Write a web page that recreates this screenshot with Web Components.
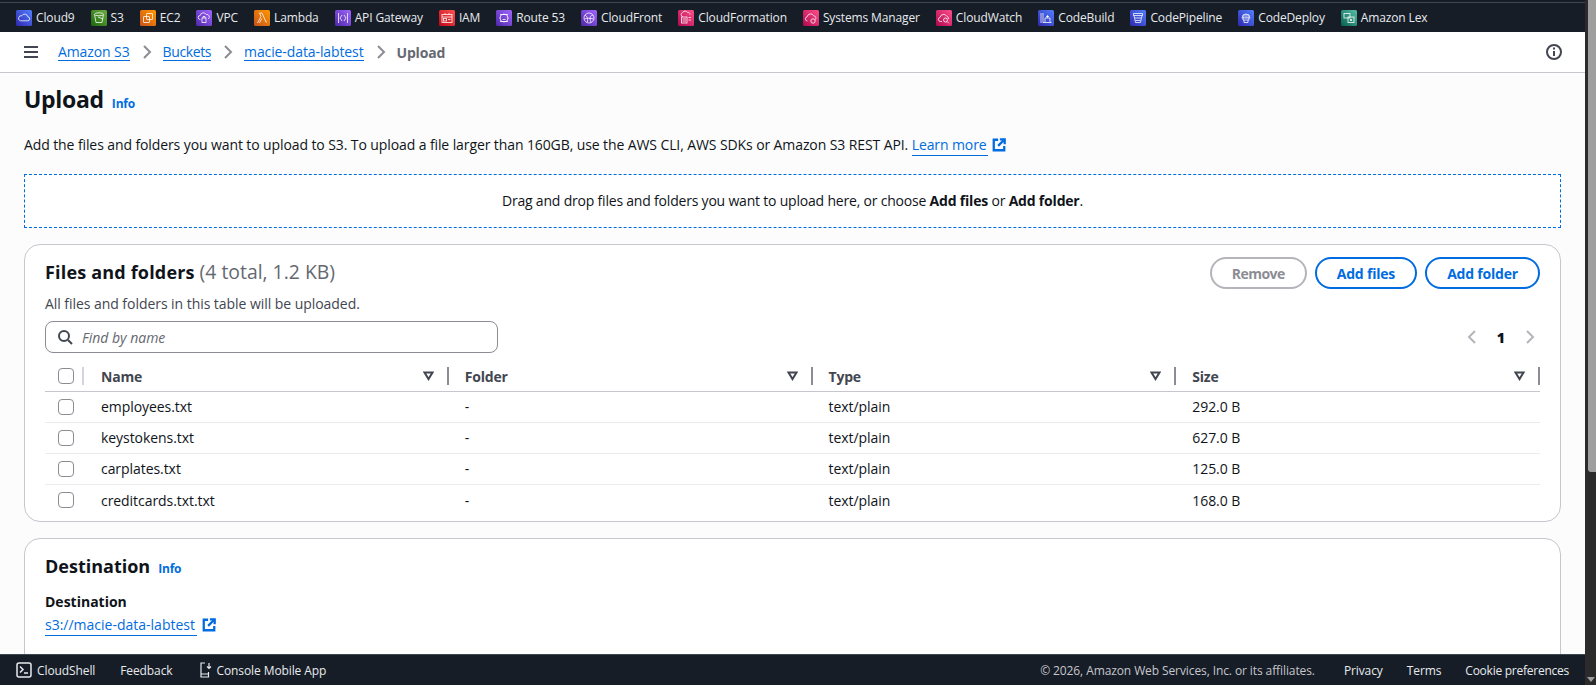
<!DOCTYPE html>
<html lang="en">
<head>
<meta charset="utf-8">
<title>Upload - Amazon S3</title>
<style>
  html, body { margin: 0; height: 100%; overflow: hidden; }
  body { font-family: "Open Sans", "Noto Sans", sans-serif; font-size: 14px; color: #0f141a; }
</style>
</head>
<body>
<console-shell>
  <service-bar slot="top"></service-bar>
  <crumb-bar slot="top"></crumb-bar>

  <info-heading size="23" tight>Upload</info-heading>
  <upload-intro>Add the files and folders you want to upload to S3. To upload a file larger than 160GB, use the AWS CLI, AWS SDKs or Amazon S3 REST API.</upload-intro>
  <drop-zone></drop-zone>
  <files-card></files-card>
  <destination-card></destination-card>

  <console-footer slot="bottom"></console-footer>
</console-shell>

<script>
"use strict";

const EXTERNAL_ICON = /*html*/ `<svg width="14" height="14" viewBox="0 0 16 16" fill="none" stroke="#006ce0" stroke-width="2.6" aria-hidden="true"><path d="M14 9v5H2V2h5"/><path d="M9 1.500h5.500V7"/><path d="M14.500 1.500 7 9"/></svg>`;

class ConsoleShell extends HTMLElement {
  constructor() {
    super();
    this.attachShadow({ mode: "open" }).innerHTML = /*html*/ `
      <style>
        :host { display: flex; height: 685px; background: #2b2b2b; }
        #page { flex: 0 0 1585px; display: flex; flex-direction: column; min-width: 0; }
        main { flex: 1 1 0; min-height: 0; overflow: hidden; background: #fcfcfc; padding: 11px 24px 0; }
        #bar { flex: 1 1 0; position: relative; }
        #thumb { margin-left: 3px; height: 472px; background: #9e9e9e; border-radius: 0 0 0 3px; }
        #arrow { position: absolute; right: 1px; bottom: 3px; width: 0; height: 0;
          border: 4px solid transparent; border-top: 5px solid #9e9e9e; border-bottom: 0; }
      </style>
      <div id="page">
        <slot name="top"></slot>
        <main><slot></slot></main>
        <slot name="bottom"></slot>
      </div>
      <div id="bar"><div id="thumb"></div><div id="arrow"></div></div>
    `;
  }
}

// glyphs for the service shortcuts, drawn on a 16x16 box
const GLYPHS = {
  cloud: `<path d="M4.500 10.800h7a2 2 0 0 0 .3-4 3.200 3.200 0 0 0-6-1 2.500 2.500 0 0 0-1.300 5Z"/>`,
  bucket: `<path d="M3.500 4.500 5 12.500h6l1.500-8"/><ellipse cx="8" cy="4.300" rx="4.500" ry="1.500"/><path d="m7 7 5 2"/>`,
  chip: `<rect x="6.500" y="3.500" width="6" height="6" rx=".5"/><rect x="3.500" y="6.500" width="6" height="6" rx=".5"/>`,
  vpc: `<path d="M4.500 9.500h-.3a2 2 0 0 1 0-4 3.200 3.200 0 0 1 6-1 2.500 2.500 0 0 1 2 4.500"/><rect x="6" y="8" width="4" height="4.500"/><path d="M7 8V6.500h2V8"/>`,
  lambda: `<path d="M3.500 13 7 6.500 5.500 3H8l4 9h1M7.800 8.500 5.500 13"/>`,
  gateway: `<path d="M3.500 3v10M12.500 3v10M7 5 5 8l2 3M9 5l2 3-2 3"/>`,
  iam: `<rect x="3" y="4.500" width="10" height="8"/><path d="M3 7h10"/><rect x="4.500" y="8.500" width="3" height="2.500"/><path d="M9 9.500h2.500M6 3v1.500M10 3v1.500"/>`,
  route: `<circle cx="8" cy="8" r="4"/><path d="M4 4.500h8M3.500 8h1M11.500 8h1M4 11.500h8M6.500 7h.1M9.500 7h.1M6.500 9.500h3"/>`,
  globe: `<circle cx="8" cy="8" r="5"/><path d="M4 5c2 1 3 3 2.500 7M12 5C9.500 5.500 8 7 10 12.500M3.500 9c2-1 6-1 9 0"/>`,
  stack: `<path d="M5 6.500h-.5a2 2 0 0 1 0-3.800 2.800 2.800 0 0 1 5-.2 2 2 0 0 1 2.500 2"/><rect x="3.500" y="7" width="5.500" height="6"/><path d="M4.500 9h3.500M4.500 11h3.500M10.500 7.500h2.500M10.500 10h2.500"/>`,
  gear: `<path d="M4.500 11h-.3a2.200 2.200 0 0 1 0-4.300 3.500 3.500 0 0 1 6.500-1 2.500 2.500 0 0 1 1.800 3.800"/><circle cx="10" cy="11" r="2.200"/>`,
  watch: `<path d="M6 11.500H4.200a2.200 2.200 0 0 1 0-4.300 3.500 3.500 0 0 1 6.500-1 2.500 2.500 0 0 1 1.800 2.800"/><circle cx="9.500" cy="10" r="2"/><path d="m11 11.500 1.800 1.800"/>`,
  build: `<path d="M3 3v10M5 3v10M5 12.500h8.500M7 12.500V8h5v4.500M9.500 8V5M8 6.500h3"/>`,
  pipeline: `<path d="M3.500 3.500h9v2h-9zM4 5.500l1.500 7h5l1.500-7M5 8h6M5.500 10.500h5"/>`,
  deploy: `<path d="M4 8a4 4 0 0 1 8 0ZM8 4v4M6 4.500 5.800 8M10 4.500l.2 3.500M5 8v2h6V8M6 10v2.500h4V10"/>`,
  lex: `<rect x="3" y="3.500" width="6" height="4.500"/><rect x="7" y="7" width="6" height="5.500"/><path d="m9 9 2 2M11 9l-2 2"/>`
};

const TONES = {
  blue: ["#2e27ad", "#527fff"],
  green: ["#1b660f", "#6cae3e"],
  orange: ["#c8511b", "#ff9900"],
  purple: ["#4d27a8", "#a166ff"],
  red: ["#bd0816", "#ff5252"],
  pink: ["#b0084d", "#ff4f8b"],
  teal: ["#055f4e", "#56c0a7"]
};

class ServiceLink extends HTMLElement {
  constructor() {
    super();
    const [from, to] = TONES[this.getAttribute("tone")];
    const glyph = GLYPHS[this.getAttribute("glyph")];
    this.attachShadow({ mode: "open" }).innerHTML = /*html*/ `
      <style>
        :host { display: flex; align-items: center; gap: 4px; color: #e8eaee; font-size: 12px; letter-spacing: -.13px; white-space: nowrap; }
        #tile { width: 16px; height: 16px; border-radius: 1.500px; background: linear-gradient(45deg, ${from}, ${to}); flex: none; }
        svg { display: block; fill: none; stroke: #fff; stroke-opacity: .85; stroke-width: .9; }
      </style>
      <div id="tile"><svg width="16" height="16" viewBox="0 0 16 16" aria-hidden="true">${glyph}</svg></div>
      <slot></slot>
    `;
  }
}

class ServiceBar extends HTMLElement {
  constructor() {
    super();
    const items = [
      ["Cloud9", "blue", "cloud"], ["S3", "green", "bucket"], ["EC2", "orange", "chip"],
      ["VPC", "purple", "vpc"], ["Lambda", "orange", "lambda"], ["API Gateway", "purple", "gateway"],
      ["IAM", "red", "iam"], ["Route 53", "purple", "route"], ["CloudFront", "purple", "globe"],
      ["CloudFormation", "pink", "stack"], ["Systems Manager", "pink", "gear"], ["CloudWatch", "pink", "watch"],
      ["CodeBuild", "blue", "build"], ["CodePipeline", "blue", "pipeline"], ["CodeDeploy", "blue", "deploy"],
      ["Amazon Lex", "teal", "lex"]
    ];
    this.attachShadow({ mode: "open" }).innerHTML = /*html*/ `
      <style>
        :host { display: flex; height: 32px; box-sizing: border-box; background: #161d26; padding: 3px 16px 0; gap: 16px;
          align-items: center; box-shadow: inset 0 2px 0 #161d26, inset 0 3px 0 #414750; }
      </style>
      ${items.map(([name, tone, glyph]) => `<service-link tone="${tone}" glyph="${glyph}">${name}</service-link>`).join("")}
    `;
  }
}

class CrumbBar extends HTMLElement {
  constructor() {
    super();
    const chevron = `<svg width="16" height="16" viewBox="0 0 16 16" fill="none" stroke="#8c8c94" stroke-width="2"><path d="m5 2 6 6-6 6"/></svg>`;
    this.attachShadow({ mode: "open" }).innerHTML = /*html*/ `
      <style>
        :host { display: flex; align-items: center; height: 41px; box-sizing: border-box; background: #fff;
          border-bottom: 1px solid #c6c6cd; padding: 0 24px; font-size: 14px; letter-spacing: -.1px; }
        a { color: #006ce0; text-decoration: none; border-bottom: 1px solid #006ce0; line-height: 17px; }
        svg { display: block; flex: none; }
        #menu { margin-right: 20px; }
        .sep { margin: 0 8px 0 9px; display: block; }
        #buckets { letter-spacing: -.4px; }
        #current { color: #656871; font-weight: 700; letter-spacing: -.2px; }
        #help { margin-left: auto; margin-right: -1px; }
      </style>
      <svg id="menu" width="14" height="12" viewBox="0 0 14 12" fill="none" stroke="#424650" stroke-width="2"><path d="M0 1h14M0 6h14M0 11h14"/></svg>
      <a>Amazon S3</a><span class="sep">${chevron}</span>
      <a id="buckets">Buckets</a><span class="sep">${chevron}</span>
      <a>macie-data-labtest</a><span class="sep">${chevron}</span>
      <span id="current">Upload</span>
      <svg id="help" width="16" height="16" viewBox="0 0 16 16" fill="none" stroke="#424650" stroke-width="2">
        <circle cx="8" cy="8" r="7"/><path d="M8 7v5M8 3.500v2"/>
      </svg>
    `;
  }
}

// heading followed by the small blue Info link
class InfoHeading extends HTMLElement {
  constructor() {
    super();
    const size = this.getAttribute("size") || "18";
    const spacing = this.hasAttribute("tight") ? "-.3px" : "0";
    this.attachShadow({ mode: "open" }).innerHTML = /*html*/ `
      <style>
        :host { display: flex; align-items: baseline; gap: 8px; }
        #title { font-size: ${size}px; font-weight: 700; line-height: 30px; letter-spacing: ${spacing}; }
        a { font-size: 12px; font-weight: 700; color: #006ce0; letter-spacing: -.2px; }
      </style>
      <span id="title"><slot></slot></span><a>Info</a>
    `;
  }
}

class UploadIntro extends HTMLElement {
  constructor() {
    super();
    this.attachShadow({ mode: "open" }).innerHTML = /*html*/ `
      <style>
        :host { display: block; margin-top: 21px; line-height: 20px; font-size: 14px; letter-spacing: -.1px; }
        a { color: #006ce0; border-bottom: 1px solid #006ce0; padding: 0 1px 1px 0; }
        svg { vertical-align: -2px; margin-left: 4px; }
      </style>
      <slot></slot> <a>Learn more</a>${EXTERNAL_ICON}
    `;
  }
}

class DropZone extends HTMLElement {
  constructor() {
    super();
    this.attachShadow({ mode: "open" }).innerHTML = /*html*/ `
      <style>
        :host { display: flex; align-items: center; justify-content: center; margin-top: 19px; height: 54px; box-sizing: border-box;
          background: #fff; border: 1px dashed #006ce0; font-size: 14px; letter-spacing: -.2px; padding-bottom: 2px; }
        b { font-weight: 700; }
      </style>
      <span>Drag and drop files and folders you want to upload here, or choose <b>Add files</b> or <b>Add folder</b>.</span>
    `;
  }
}

class PillButton extends HTMLElement {
  constructor() {
    super();
    this.attachShadow({ mode: "open" }).innerHTML = /*html*/ `
      <style>
        :host { display: flex; align-items: center; justify-content: center; box-sizing: border-box; height: 32px; padding: 0 20px;
          border: 2px solid #006ce0; border-radius: 20px; color: #006ce0; font-size: 14px; font-weight: 700; white-space: nowrap; letter-spacing: -.2px; }
        :host([disabled]) { border-color: #b4b4bb; color: #8c8c94; letter-spacing: -.55px; }
      </style>
      <slot></slot>
    `;
  }
}

class FileTable extends HTMLElement {
  constructor() {
    super();
    const filter = `<svg width="11" height="10" viewBox="0 0 11 10" fill="none" stroke="#424650" stroke-width="2"><path d="M1.500 1.500h8L5.500 8Z"/></svg>`;
    const box = `<span class="box"></span>`;
    const heads = ["Name", "Folder", "Type", "Size"];
    const rows = [
      ["employees.txt", "-", "text/plain", "292.0 B"],
      ["keystokens.txt", "-", "text/plain", "627.0 B"],
      ["carplates.txt", "-", "text/plain", "125.0 B"],
      ["creditcards.txt.txt", "-", "text/plain", "168.0 B"]
    ];
    this.attachShadow({ mode: "open" }).innerHTML = /*html*/ `
      <style>
        :host { display: block; font-size: 14px; }
        .row { display: grid; grid-template-columns: 40px repeat(4, 1fr); }
        .box { display: block; width: 16px; height: 16px; box-sizing: border-box; border: 1px solid #8c8c94; border-radius: 4px; background: #fff; }
        #head { height: 24px; border-bottom: 1px solid #c6c6cd; font-weight: 700; color: #424650; letter-spacing: -.2px; }
        #head > div { display: flex; align-items: center; height: 18px; }
        #head .pick { padding: 0 0 0 13px; border-right: 2px solid #d4d4da; margin-right: 1px; }
        #head .col { justify-content: space-between; padding: 0 13px 0 16px; border-right: 2px solid #8c8c94; }
        svg { display: block; }
        .file { height: 31px; box-sizing: border-box; align-items: center; border-bottom: 1px solid #ebebf0; padding-bottom: 1px; letter-spacing: -.06px; }
        .file:last-child { border-bottom: 0; }
        .file > div { padding-left: 16px; }
        .file > div.pick { padding-left: 13px; }
      </style>
      <div class="row" id="head">
        <div class="pick">${box}</div>
        ${heads.map((h) => `<div class="col"><span>${h}</span>${filter}</div>`).join("")}
      </div>
      ${rows.map((r) => `<div class="row file"><div class="pick">${box}</div>${r.map((c) => `<div>${c}</div>`).join("")}</div>`).join("")}
    `;
  }
}

class FilesCard extends HTMLElement {
  constructor() {
    super();
    this.attachShadow({ mode: "open" }).innerHTML = /*html*/ `
      <style>
        :host { display: block; margin-top: 16px; height: 278px; box-sizing: border-box; background: #fff;
          border: 1px solid #c6c6cd; border-radius: 16px; padding: 12px 20px 0; }
        #top { display: flex; justify-content: space-between; height: 32px; }
        h2 { margin: 0; font-size: 18px; font-weight: 700; line-height: 30px; letter-spacing: .18px; }
        h2 span { font-weight: 400; font-size: 19.4px; color: #656871; letter-spacing: 0; }
        #actions { display: flex; gap: 8px; }
        p { margin: 7px 0 0; font-size: 14px; line-height: 16px; color: #424650; letter-spacing: -.05px; }
        #tools { display: flex; justify-content: space-between; align-items: center; margin-top: 9px; height: 32px; }
        #search { display: flex; align-items: center; gap: 9px; width: 453px; height: 32px; box-sizing: border-box; padding: 0 11px;
          background: #fff; border: 1px solid #8c8c94; border-radius: 8px; font-style: italic; font-size: 14px; color: #656871; }
        #pages { display: flex; align-items: center; font-weight: 700; font-size: 14px; margin-right: 2px; }
        #pages b { margin: 0 17px 0 17px; }
        svg { display: block; }
        file-table { margin-top: 14px; }
      </style>
      <div id="top">
        <h2>Files and folders <span>(4 total, 1.2 KB)</span></h2>
        <div id="actions">
          <pill-button disabled>Remove</pill-button>
          <pill-button>Add files</pill-button>
          <pill-button>Add folder</pill-button>
        </div>
      </div>
      <p>All files and folders in this table will be uploaded.</p>
      <div id="tools">
        <div id="search">
          <svg width="16" height="16" viewBox="0 0 16 16" fill="none" stroke="#424650" stroke-width="2"><circle cx="7" cy="7" r="5"/><path d="m11 11 4 4"/></svg>
          Find by name
        </div>
        <div id="pages">
          <svg width="16" height="16" viewBox="0 0 16 16" fill="none" stroke="#b4b4bb" stroke-width="2"><path d="m11 2-6 6 6 6"/></svg>
          <b>1</b>
          <svg width="16" height="16" viewBox="0 0 16 16" fill="none" stroke="#b4b4bb" stroke-width="2"><path d="m5 2 6 6-6 6"/></svg>
        </div>
      </div>
      <file-table></file-table>
    `;
  }
}

class DestinationCard extends HTMLElement {
  constructor() {
    super();
    this.attachShadow({ mode: "open" }).innerHTML = /*html*/ `
      <style>
        :host { display: block; margin-top: 16px; height: 160px; box-sizing: border-box; background: #fff;
          border: 1px solid #c6c6cd; border-radius: 16px 16px 0 0; padding: 12px 20px 0; }
        #label { font-weight: 700; font-size: 14px; line-height: 20px; margin-top: 11px; }
        #link { margin-top: 3px; line-height: 20px; }
        a { color: #006ce0; border-bottom: 1px solid #006ce0; padding: 0 2px 1px 0; }
        svg { vertical-align: -2px; margin-left: 5px; }
      </style>
      <info-heading>Destination</info-heading>
      <div id="label">Destination</div>
      <div id="link"><a>s3://macie-data-labtest</a>${EXTERNAL_ICON}</div>
    `;
  }
}

class ConsoleFooter extends HTMLElement {
  constructor() {
    super();
    this.attachShadow({ mode: "open" }).innerHTML = /*html*/ `
      <style>
        :host { display: flex; align-items: center; height: 31px; box-sizing: border-box; background: #161d26; border-top: 1px solid #414750;
          padding: 0 16px; font-size: 12px; color: #e8eaee; white-space: nowrap; letter-spacing: -.1px; }
        svg { display: block; flex: none; }
        span { display: block; }
        #shell { margin: 0 25px 0 5px; }
        #feedback { margin-right: 27px; }
        #mobile { margin-left: 5px; }
        #copy { margin-left: auto; color: #c6c6cd; margin-right: 29px; }
        #terms { margin: 0 24px; }
        #cookie { letter-spacing: -.25px; }
      </style>
      <svg width="16" height="16" viewBox="0 0 16 16" fill="none" stroke="#e8eaee" stroke-width="1.500"><rect x="1" y="1" width="14" height="14" rx="2"/><path d="m4 4.500 3 3-3 3M8 11h4"/></svg>
      <span id="shell">CloudShell</span>
      <span id="feedback">Feedback</span>
      <svg width="12" height="16" viewBox="0 0 12 16" fill="none" stroke="#e8eaee" stroke-width="1.200"><path d="M5 1H1v14h7.500v-5M1 12h7.500M9 1v5M7 4.500 9 6.500l2-2"/></svg>
      <span id="mobile">Console Mobile App</span>
      <span id="copy">© 2026, Amazon Web Services, Inc. or its affiliates.</span>
      <span>Privacy</span>
      <span id="terms">Terms</span>
      <span id="cookie">Cookie preferences</span>
    `;
  }
}

customElements.define("console-shell", ConsoleShell);
customElements.define("service-link", ServiceLink);
customElements.define("service-bar", ServiceBar);
customElements.define("crumb-bar", CrumbBar);
customElements.define("info-heading", InfoHeading);
customElements.define("upload-intro", UploadIntro);
customElements.define("drop-zone", DropZone);
customElements.define("pill-button", PillButton);
customElements.define("file-table", FileTable);
customElements.define("files-card", FilesCard);
customElements.define("destination-card", DestinationCard);
customElements.define("console-footer", ConsoleFooter);
</script>
</body>
</html>
